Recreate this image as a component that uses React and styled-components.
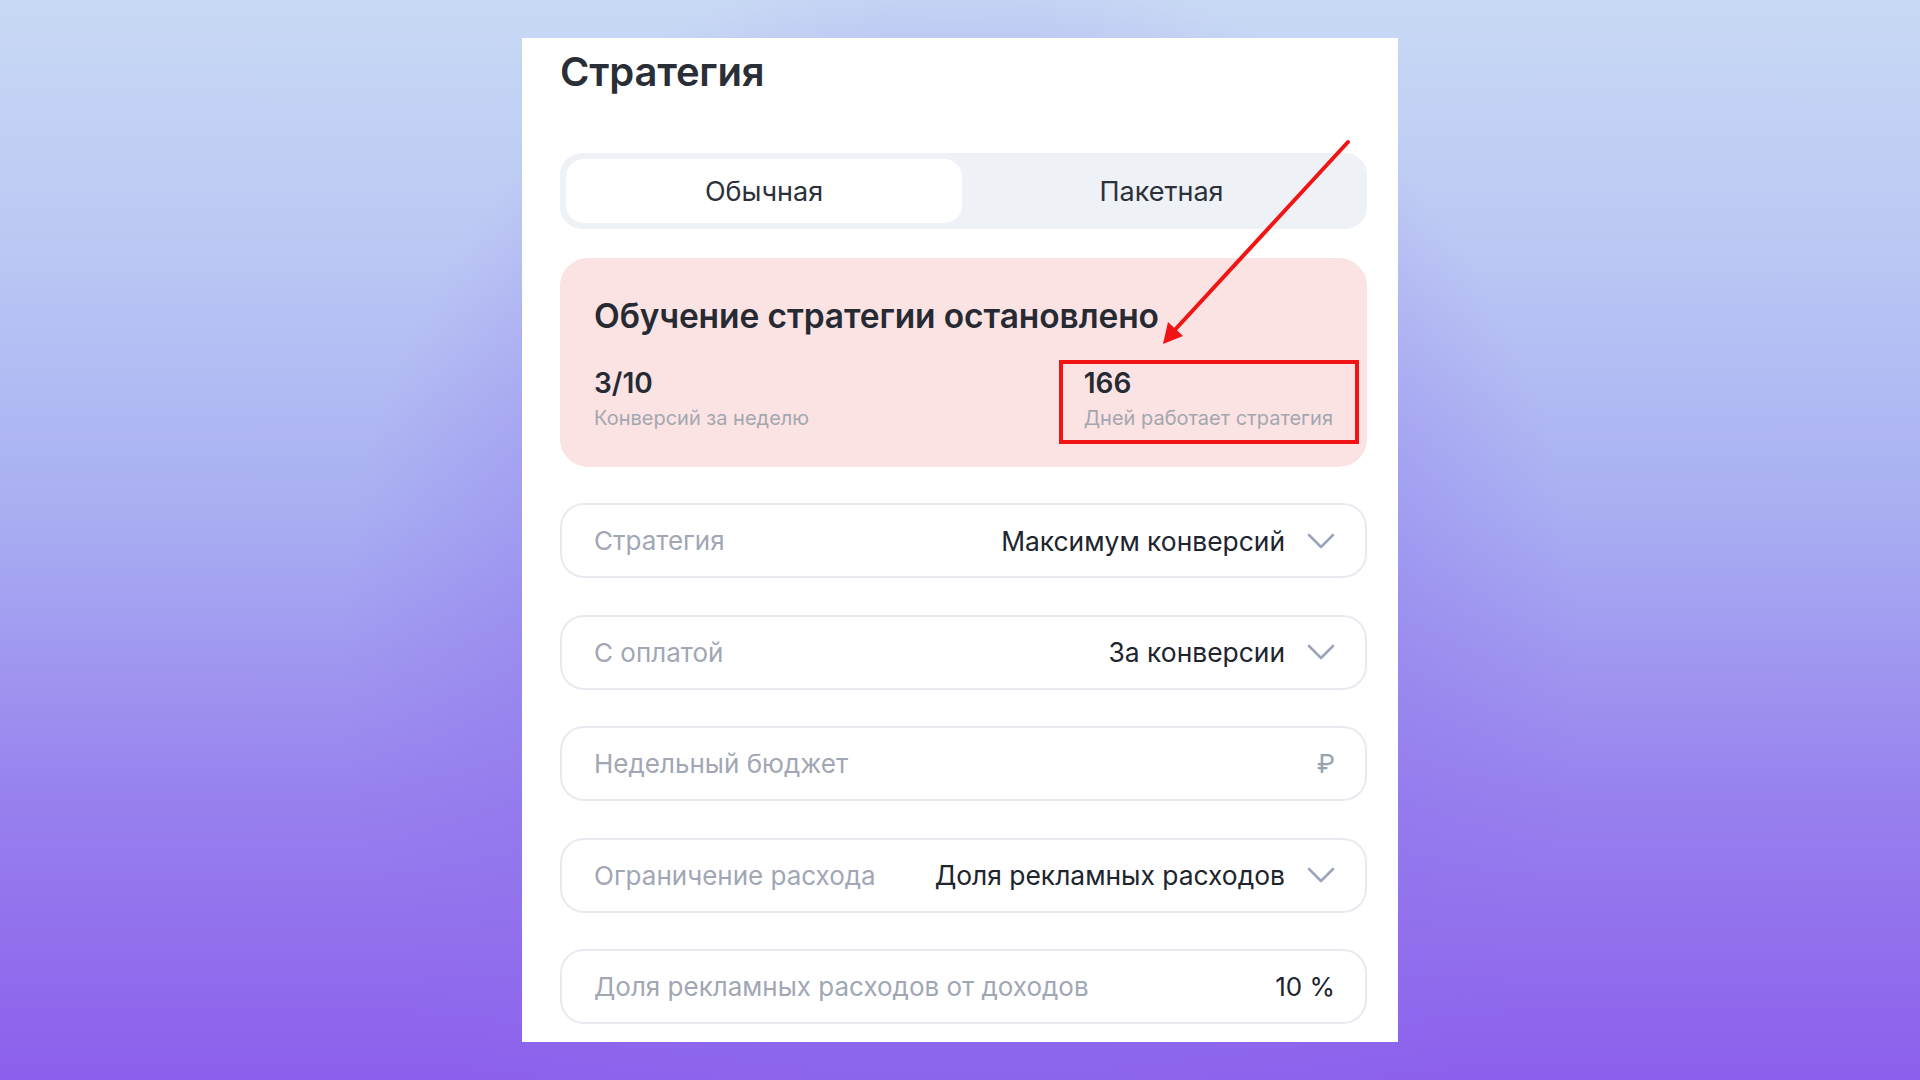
import React from "react";
import styled, { createGlobalStyle } from "styled-components";

const Global = createGlobalStyle`
  html, body { margin: 0; padding: 0; }
  body {
    width: 1920px;
    height: 1080px;
    overflow: hidden;
    font-family: Inter, "Noto Sans", "Liberation Sans", sans-serif;
    background:
      radial-gradient(ellipse 620px 720px at 50% 62%, rgba(132, 88, 232, 0.85) 0%, rgba(140, 110, 236, 0.55) 45%, rgba(150, 140, 240, 0) 100%),
      linear-gradient(180deg, #c8d9f4 0%, #bcc8f4 22%, #a8aef2 48%, #977fee 75%, #8c5fec 100%);
  }
  #root { width: 1920px; height: 1080px; }
`;

const Stage = styled.div`
  width: 1920px;
  height: 1080px;
  display: flex;
  justify-content: center;
  align-items: flex-start;
  padding-top: 38px;
  box-sizing: border-box;
`;

const Card = styled.section`
  position: relative;
  width: 876px;
  height: 1004px;
  box-sizing: border-box;
  background: #ffffff;
  padding: 10px 31px 0 38px;
  display: flex;
  flex-direction: column;
  overflow: hidden;
`;

const Title = styled.h1`
  margin: 0;
  font-size: 40px;
  line-height: 48px;
  font-weight: 600;
  color: #2a2e37;
  letter-spacing: -0.2px;
`;

const Tabs = styled.div`
  margin-top: 57px;
  height: 76px;
  box-sizing: border-box;
  background: #eef1f6;
  border-radius: 22px;
  padding: 6px;
  display: grid;
  grid-template-columns: 396px 1fr;
`;

const Tab = styled.div`
  display: flex;
  align-items: center;
  justify-content: center;
  border-radius: 18px;
  font-size: 27px;
  color: #2c303a;
  background: ${(p) => (p.$active ? "#ffffff" : "transparent")};
`;

const Alert = styled.div`
  margin-top: 29px;
  height: 209px;
  box-sizing: border-box;
  background: #fbe3e3;
  border-radius: 28px;
  padding: 38px 34px 0 34px;
  display: flex;
  flex-direction: column;
`;

const AlertTitle = styled.h2`
  margin: 0;
  font-size: 33.5px;
  line-height: 40px;
  font-weight: 600;
  color: #262a33;
  letter-spacing: -0.1px;
`;

const Stats = styled.div`
  margin-top: 30px;
  display: flex;
  justify-content: space-between;
`;

const Stat = styled.div`
  position: relative;
  display: flex;
  flex-direction: column;
`;

const StatValue = styled.div`
  font-size: 28px;
  line-height: 34px;
  font-weight: 600;
  color: #262a33;
`;

const StatLabel = styled.div`
  margin-top: 5px;
  font-size: 20px;
  line-height: 26px;
  color: #a3a7b0;
`;

const Highlight = styled.div`
  position: absolute;
  left: -25px;
  right: -26px;
  top: -6px;
  bottom: -13px;
  border: 4px solid #f01414;
`;

const Fields = styled.div`
  margin-top: 36px;
  display: flex;
  flex-direction: column;
  gap: 36.5px;
`;

const Field = styled.div`
  height: 75px;
  box-sizing: border-box;
  border: 2px solid #e8eaf0;
  border-radius: 24px;
  padding: 0 30px 0 32px;
  display: flex;
  align-items: center;
  gap: 20px;
`;

const Label = styled.span`
  flex: 1;
  font-size: 26px;
  color: #a1a7b4;
  white-space: nowrap;
`;

const Value = styled.span`
  font-size: 26.4px;
  color: #20242d;
  white-space: nowrap;
`;

const Suffix = styled.span`
  font-size: 26px;
  color: ${(p) => (p.$muted ? "#9aa1ae" : "#20242d")};
`;

const Chevron = styled.svg`
  width: 28px;
  height: 16px;
  flex: none;
  margin-left: 2px;
`;

const Arrow = styled.svg`
  position: absolute;
  left: 0;
  top: 0;
  width: 876px;
  height: 400px;
  pointer-events: none;
`;

const Down = () => (
  <Chevron viewBox="0 0 28 16">
    <path d="M2 2 L14 14 L26 2" fill="none" stroke="#9aa4ba" strokeWidth="2.6" strokeLinecap="round" strokeLinejoin="round" />
  </Chevron>
);

export default function App() {
  return (
    <>
      <Global />
      <Stage>
        <Card>
          <Title>Стратегия</Title>
          <Tabs>
            <Tab $active>Обычная</Tab>
            <Tab>Пакетная</Tab>
          </Tabs>
          <Alert>
            <AlertTitle>Обучение стратегии остановлено</AlertTitle>
            <Stats>
              <Stat>
                <StatValue>3/10</StatValue>
                <StatLabel>Конверсий за неделю</StatLabel>
              </Stat>
              <Stat>
                <StatValue>166</StatValue>
                <StatLabel>Дней работает стратегия</StatLabel>
                <Highlight />
              </Stat>
            </Stats>
          </Alert>
          <Fields>
            <Field>
              <Label>Стратегия</Label>
              <Value>Максимум конверсий</Value>
              <Down />
            </Field>
            <Field>
              <Label>С оплатой</Label>
              <Value>За конверсии</Value>
              <Down />
            </Field>
            <Field>
              <Label>Недельный бюджет</Label>
              <Suffix $muted>₽</Suffix>
            </Field>
            <Field>
              <Label>Ограничение расхода</Label>
              <Value>Доля рекламных расходов</Value>
              <Down />
            </Field>
            <Field>
              <Label>Доля рекламных расходов от доходов</Label>
              <Suffix>10 %</Suffix>
            </Field>
          </Fields>
          <Arrow viewBox="0 0 876 400">
            <line x1="826" y1="104" x2="650" y2="295" stroke="#f01414" strokeWidth="4" strokeLinecap="round" />
            <polygon points="641,306 646,284 661,298" fill="#f01414" />
          </Arrow>
        </Card>
      </Stage>
    </>
  );
}
